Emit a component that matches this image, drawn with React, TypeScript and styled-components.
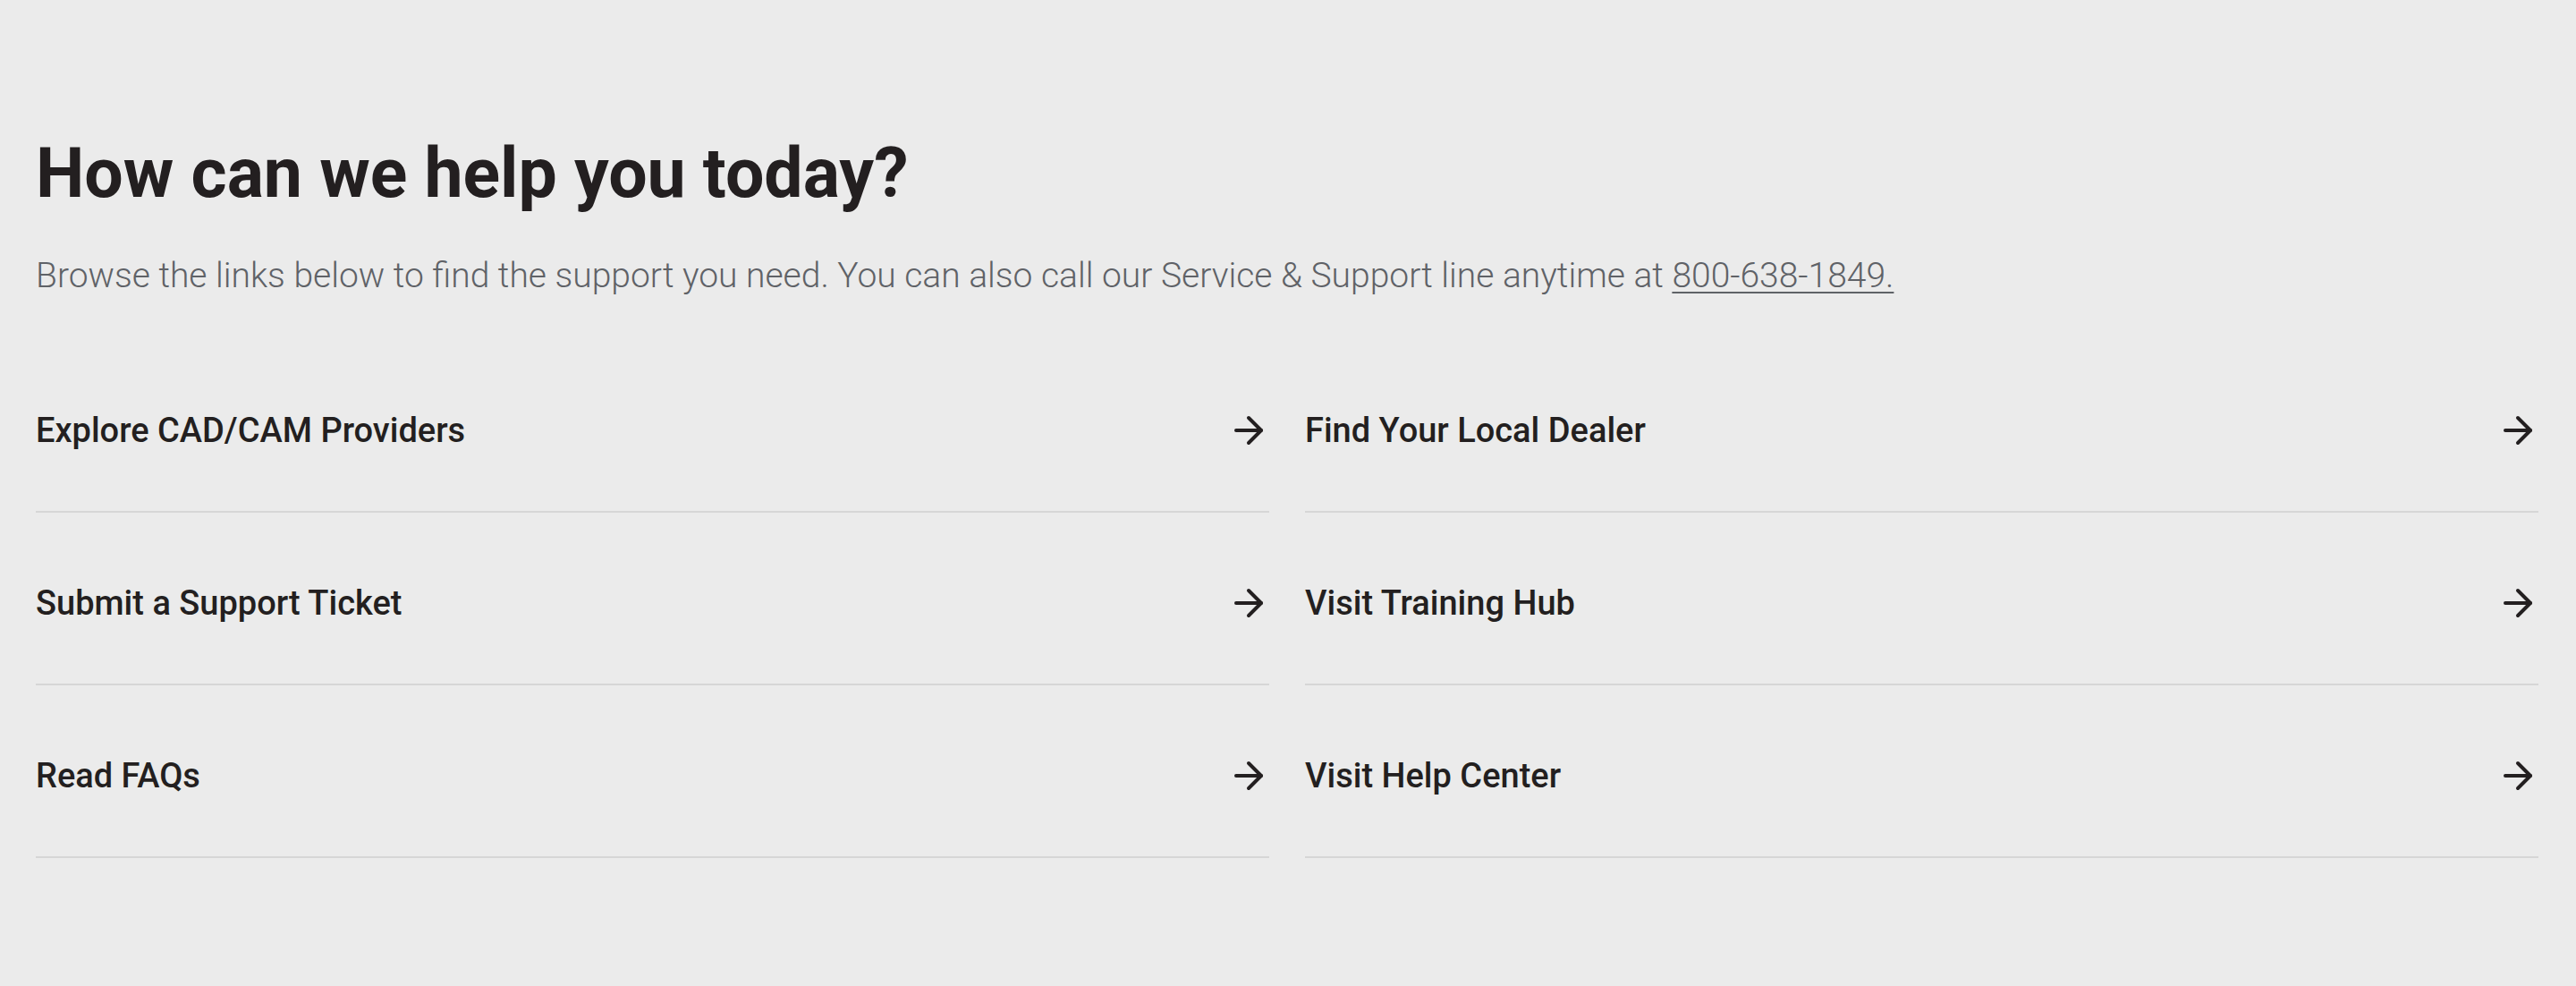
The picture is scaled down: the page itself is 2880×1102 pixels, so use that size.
import React from 'react'
import styled, { createGlobalStyle } from 'styled-components'
import { ArrowRight } from 'lucide-react'

const GlobalStyle = createGlobalStyle`
  html,
  body {
    margin: 0;
    padding: 0;
    background-color: #ebebeb;
  }

  body {
    font-family: Roboto, 'Liberation Sans', sans-serif;
    color: #231f20;
  }
`

const Section = styled.section`
  box-sizing: border-box;
  min-height: 100vh;
  padding: 149px 42px 0 40px;
`

const Title = styled.h1`
  margin: 0;
  font-size: 77px;
  line-height: 91px;
  font-weight: 700;
  color: #231f20;
`

const Intro = styled.p`
  margin: 42px 0 0;
  font-size: 39px;
  line-height: 52px;
  font-weight: 300;
  color: #5f6267;
`

const Phone = styled.a`
  color: inherit;
  text-decoration: underline;
  text-decoration-thickness: 2px;
  text-underline-offset: 5px;
`

const LinkGrid = styled.div`
  display: grid;
  grid-template-columns: 1fr 1fr;
  column-gap: 40px;
  margin-top: 46px;
`

const LinkRow = styled.a`
  display: flex;
  align-items: center;
  justify-content: space-between;
  padding: 77px 0 66px;
  border-bottom: 2px solid #d6d6d6;
  color: #231f20;
  text-decoration: none;
  cursor: pointer;

  svg {
    flex-shrink: 0;
    margin-right: -1px;
  }
`

const LinkLabel = styled.span`
  font-size: 38px;
  line-height: 48px;
  font-weight: 500;
`

const links = [
  'Explore CAD/CAM Providers',
  'Find Your Local Dealer',
  'Submit a Support Ticket',
  'Visit Training Hub',
  'Read FAQs',
  'Visit Help Center',
]

export default function App() {
  return (
    <>
      <GlobalStyle />
      <Section>
        <Title>How can we help you today?</Title>
        <Intro>
          Browse the links below to find the support you need. You can also call our Service &amp; Support line
          anytime at <Phone href="tel:8006381849">800-638-1849.</Phone>
        </Intro>
        <LinkGrid>
          {links.map((label) => (
            <LinkRow key={label} href="#">
              <LinkLabel>{label}</LinkLabel>
              <ArrowRight size={48} strokeWidth={2} />
            </LinkRow>
          ))}
        </LinkGrid>
      </Section>
    </>
  )
}
